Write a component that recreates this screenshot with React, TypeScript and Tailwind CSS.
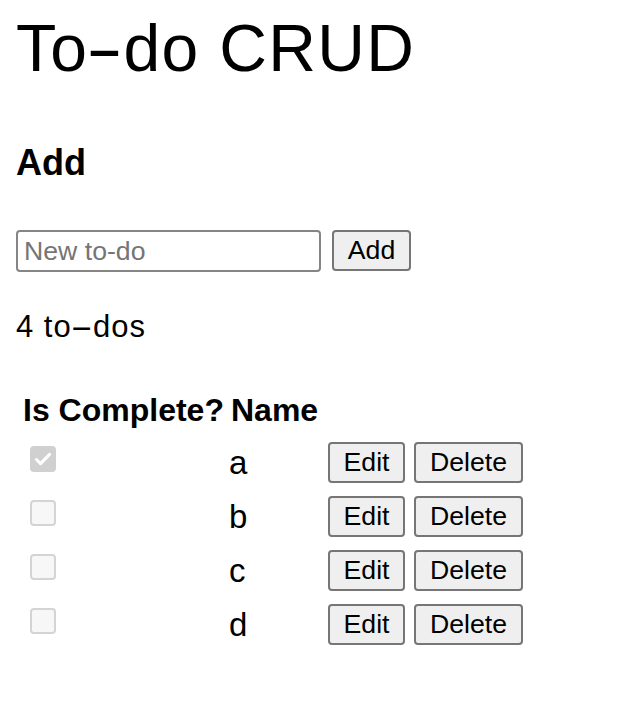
import { useState } from "react";

type Todo = { id: number; name: string; done: boolean };

const INITIAL: Todo[] = [
    { id: 1, name: "a", done: true },
    { id: 2, name: "b", done: false },
    { id: 3, name: "c", done: false },
    { id: 4, name: "d", done: false },
];

const btn =
    "h-[41px] bg-[#efefef] border-2 border-[#767676] rounded-[4px] text-[26.67px] leading-none text-black font-['Liberation_Sans',Arial,sans-serif]";

function Check({ checked }: { checked: boolean }) {
    return checked ? (
        <span className="block w-[26px] h-[26px] rounded-[4px] bg-[#d0d0d0] flex items-center justify-center">
            <svg viewBox="0 0 16 16" className="w-[22px] h-[22px]">
                <path d="M3.2 8.4l3 3L12.8 4.6" fill="none" stroke="#fff" strokeWidth="2.2" strokeLinecap="round" strokeLinejoin="round" />
            </svg>
        </span>
    ) : (
        <span className="block w-[26px] h-[26px] rounded-[4px] bg-[#f7f7f7] border-2 border-[#d4d4d4]" />
    );
}

export default function App() {
    const [todos] = useState(INITIAL);
    const [text, setText] = useState("");

    return (
        <div className="min-h-screen bg-white text-black px-4 pt-[15px] font-['Liberation_Sans',Arial,sans-serif]">
            <h1 className="text-[66px] leading-[66px] tracking-[1.3px]">
                To<span className="inline-block scale-x-[1.7] px-[6px]">-</span>do CRUD
            </h1>

            <h3 className="mt-[64px] text-[36px] leading-[36px] font-bold">Add</h3>

            <form className="mt-[49px] flex items-start gap-[11px]" onSubmit={(e) => e.preventDefault()}>
                <input
                    value={text}
                    onChange={(e) => setText(e.target.value)}
                    placeholder="New to-do"
                    className="w-[305px] h-[42px] border-2 border-[#858585] rounded-[4px] pl-[6px] text-[26.67px] placeholder:text-[#757575] outline-none"
                />
                <button className={`${btn} w-[79px]`}>Add</button>
            </form>

            <p className="mt-[40px] text-[31px] leading-[30px] tracking-[1px]">
                {todos.length} to<span className="inline-block scale-x-[2.2] px-[5px]">-</span>dos
            </p>

            {/* table */}
            <div className="mt-[52px] grid grid-cols-[213px_99px_auto]">
                <div className="pl-[7px] text-[32px] leading-[32px] font-bold">Is Complete?</div>
                <div className="pl-[2px] text-[32px] leading-[32px] font-bold">Name</div>
                <div />
            </div>

            <div className="mt-[16px] flex flex-col">
                {todos.map((t) => (
                    <div key={t.id} className="grid grid-cols-[213px_99px_auto] h-[54px]">
                        <div className="pl-[14px] pt-[4px]">
                            <Check checked={t.done} />
                        </div>
                        <div className="text-[33px] leading-[41px]">{t.name}</div>
                        <div className="flex gap-[9px]">
                            <button className={`${btn} w-[77px]`}>Edit</button>
                            <button className={`${btn} w-[109px]`}>Delete</button>
                        </div>
                    </div>
                ))}
            </div>
        </div>
    );
}
